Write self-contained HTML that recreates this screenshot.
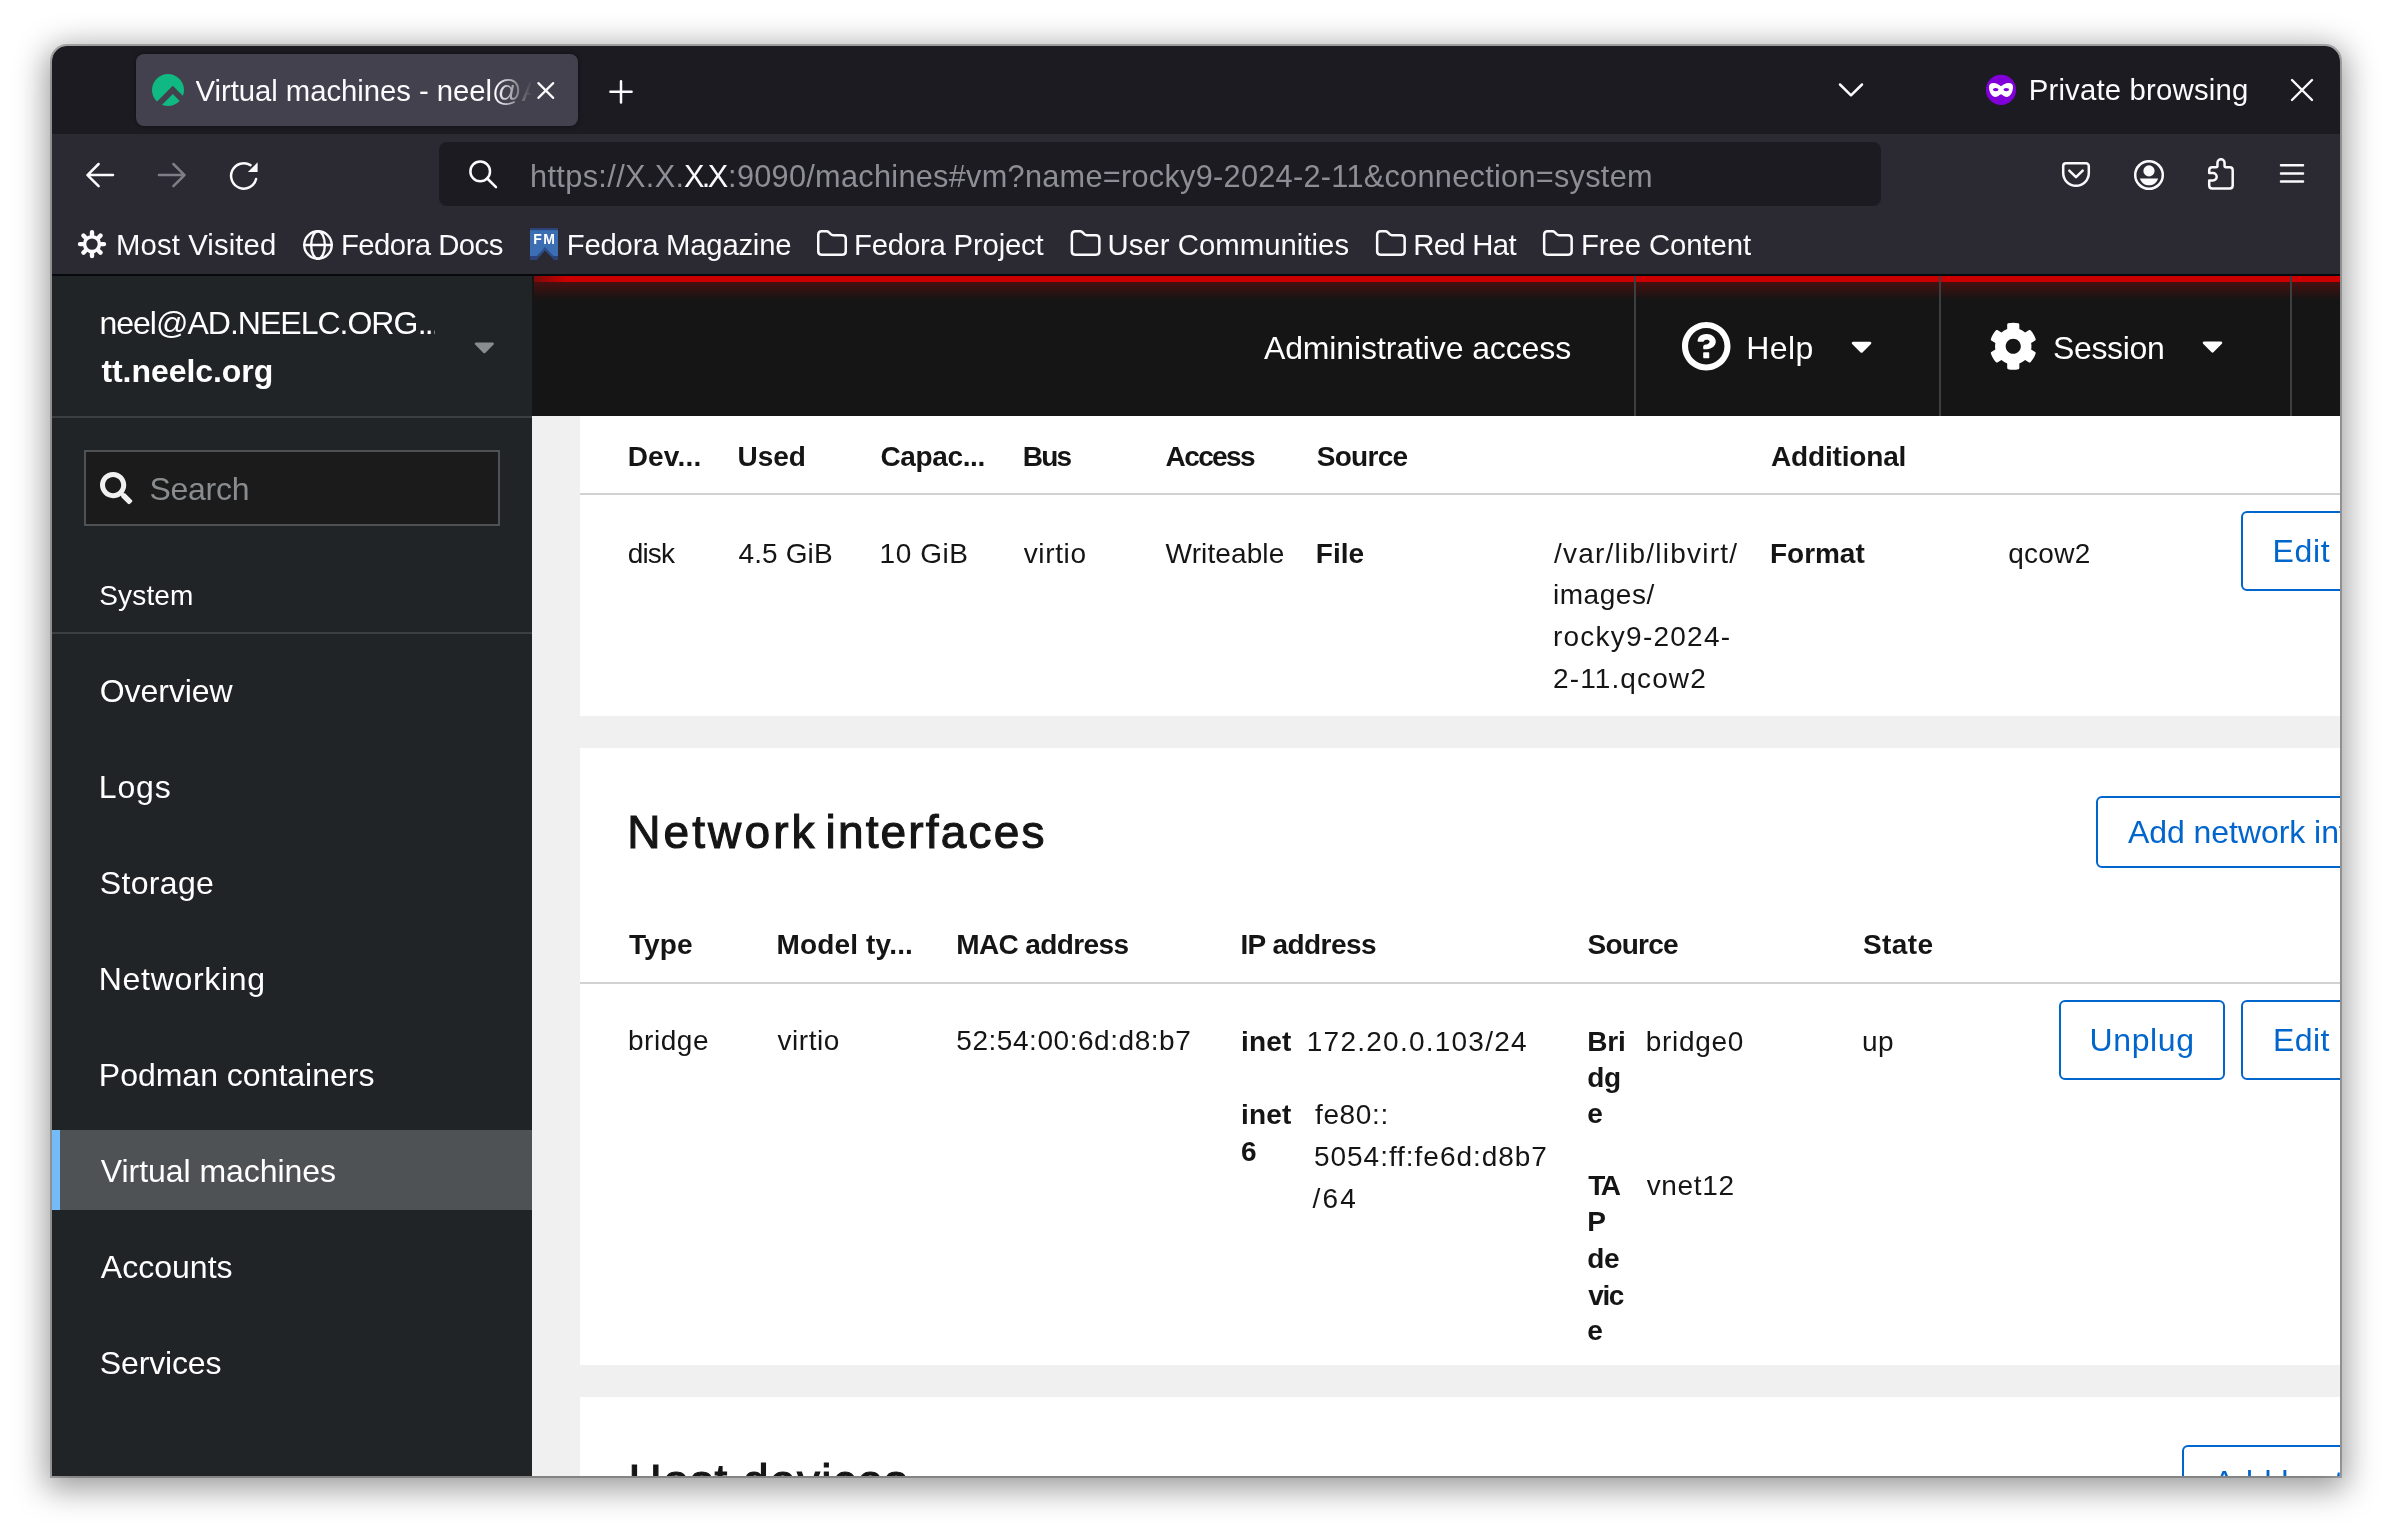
<!DOCTYPE html>
<html lang="en"><head><meta charset="utf-8"><title>Virtual machines - neel@AD.NEELC.ORG</title>
<style>
html,body{margin:0;padding:0;background:#fff}
body{width:2392px;height:1534px;position:relative;overflow:hidden;font-family:"Liberation Sans",sans-serif}
#shadow{position:absolute;left:52px;top:46px;width:2288px;height:1430px;border-radius:15px 15px 0 0;box-shadow:0 0 0 2px rgba(0,0,0,.25),0 7px 32px 6px rgba(0,0,0,.4)}
#win{position:absolute;left:52px;top:46px;width:2288px;height:1430px;border-radius:15px 15px 0 0;overflow:hidden;background:#f0f0f0}
#abs{position:absolute;left:-52px;top:-46px;width:2392px;height:1534px;will-change:transform}
.b{position:absolute}
.t{position:absolute;white-space:nowrap}
svg{position:absolute;overflow:visible}
.btn{position:absolute;border:2px solid #0066cc;border-radius:6px;box-sizing:border-box;background:#fff}
</style></head><body>
<div id="shadow"></div>
<div id="win"><div id="abs">
<!-- firefox chrome -->
<div class="b" style="left:52px;top:46px;width:2288px;height:88px;background:#1c1b22"></div>
<div class="b" style="left:52px;top:134px;width:2288px;height:140px;background:#2b2a33"></div>
<div class="b" style="left:52px;top:274px;width:2288px;height:2px;background:#060a0c"></div>
<div class="b" style="left:136px;top:54px;width:442px;height:72px;background:#42414d;border-radius:8px;box-shadow:0 0 4px rgba(0,0,0,.5)"></div>
<div class="b" style="left:439px;top:142px;width:1442px;height:64px;background:#1c1b22;border-radius:8px"></div>
<svg width="2392" height="1534" viewBox="0 0 2392 1534" style="left:0;top:0"><clipPath id="rc"><circle cx="168" cy="90" r="16"/></clipPath>
<g clip-path="url(#rc)" fill="#10b981">
<polygon points="150,72 186,72 186,99 172.8,85.8 151,107.6"/>
<polygon points="172.8,94 159,107.8 181,107.8 181,102.2"/></g>
<path d="M538.4 83.1 L553.2 97.9 M553.2 83.1 L538.4 97.9" fill="none" stroke="#fbfbfe" stroke-width="2.2" stroke-linecap="round" stroke-linejoin="round" />
<path d="M610.4 91.8 H631.6 M621 81.2 V102.4" fill="none" stroke="#fbfbfe" stroke-width="2.5" stroke-linecap="round" stroke-linejoin="round" />
<path d="M1840 84.5 L1851 95.3 L1862 84.5" fill="none" stroke="#fbfbfe" stroke-width="2.5" stroke-linecap="round" stroke-linejoin="round" />
<circle cx="2001" cy="89.9" r="15.1" fill="#8000d7"/>
<path fill="#fff" d="M2001 86.3 C1998.5 84.5 1996.5 83 1993.5 83 C1990.5 83 1989 84.5 1989 87 C1989 91.5 1991.5 97 1995.5 97 C1998 97 1999.5 94.2 2001 94.2 C2002.5 94.2 2004 97 2006.5 97 C2010.5 97 2013 91.5 2013 87 C2013 84.5 2011.5 83 2008.5 83 C2005.5 83 2003.5 84.5 2001 86.3 Z"/>
<ellipse cx="1995.7" cy="89.6" rx="2.8" ry="1.7" fill="#8000d7"/><ellipse cx="2006.3" cy="89.6" rx="2.8" ry="1.7" fill="#8000d7"/>
<path d="M2292 80 L2312 100 M2312 80 L2292 100" fill="none" stroke="#fbfbfe" stroke-width="2.4" stroke-linecap="round" stroke-linejoin="round" />
<path d="M113 175.1 H87.5 M98.6 164 L87.5 175.1 L98.6 186.2" fill="none" stroke="#fbfbfe" stroke-width="2.5" stroke-linecap="round" stroke-linejoin="round" />
<path d="M159 175.1 H184.5 M173.4 164 L184.5 175.1 L173.4 186.2" fill="none" stroke="#7f7e86" stroke-width="2.5" stroke-linecap="round" stroke-linejoin="round" />
<path d="M256.1 179 A12.7 12.7 0 1 1 250.5 165.1" fill="none" stroke="#fbfbfe" stroke-width="2.5" stroke-linecap="round" stroke-linejoin="round" /><path d="M257.6 162.3 V172 H247.9 Z" fill="#fbfbfe"/>
<circle cx="480.2" cy="171.4" r="9.8" fill="none" stroke="#fbfbfe" stroke-width="2.5" stroke-linecap="round" stroke-linejoin="round" /><path d="M487.3 178.5 L496 187.2" fill="none" stroke="#fbfbfe" stroke-width="2.5" stroke-linecap="round" stroke-linejoin="round" />
<path d="M2066 163.2 H2086 A2.8 2.8 0 0 1 2088.8 166 V173 A12.8 12.8 0 0 1 2063.2 173 V166 A2.8 2.8 0 0 1 2066 163.2 Z M2069.3 170.6 L2076 177.2 L2082.7 170.6" fill="none" stroke="#fbfbfe" stroke-width="2.5" stroke-linecap="round" stroke-linejoin="round" />
<circle cx="2149" cy="175" r="13.8" fill="none" stroke="#fbfbfe" stroke-width="2.5" stroke-linecap="round" stroke-linejoin="round" /><circle cx="2149" cy="170.9" r="5.6" fill="#fbfbfe"/><path d="M2139.8 178.4 H2158.2 C2156.5 183 2153 185.3 2149 185.3 C2145 185.3 2141.5 183 2139.8 178.4 Z" fill="#fbfbfe"/>
<path d="M2209.2 170.3 Q2209.2 167.3 2212.2 167.3 H2216 Q2217.45 167.3 2217.45 165.8 V162.85 A3.55 3.55 0 0 1 2224.55 162.85 V165.8 Q2224.55 167.3 2226 167.3 H2229.7 Q2232.7 167.3 2232.7 170.3 V185.6 Q2232.7 188.6 2229.7 188.6 H2212.2 Q2209.2 188.6 2209.2 185.6 V180.5 H2212.9 A3.8 3.8 0 0 0 2212.9 172.9 H2209.2 Z" fill="none" stroke="#fbfbfe" stroke-width="2.5" stroke-linecap="round" stroke-linejoin="round" />
<path d="M2281 165.3 H2303 M2281 173.4 H2303 M2281 181.6 H2303" fill="none" stroke="#fbfbfe" stroke-width="2.5" stroke-linecap="round" stroke-linejoin="round" />
<circle cx="92" cy="244.1" r="7.45" fill="none" stroke="#fbfbfe" stroke-width="3.5"/><path d="M101.00 244.10 L104.00 244.10 M98.36 250.46 L100.49 252.59 M92.00 253.10 L92.00 256.10 M85.64 250.46 L83.51 252.59 M83.00 244.10 L80.00 244.10 M85.64 237.74 L83.51 235.61 M92.00 235.10 L92.00 232.10 M98.36 237.74 L100.49 235.61 " fill="none" stroke="#fbfbfe" stroke-width="4.4" stroke-linecap="round" stroke-linejoin="round" />
<circle cx="318" cy="245" r="13.75" fill="none" stroke="#fbfbfe" stroke-width="2.4" stroke-linecap="round" stroke-linejoin="round" /><ellipse cx="318" cy="245" rx="6.85" ry="13.75" fill="none" stroke="#fbfbfe" stroke-width="2.4" stroke-linecap="round" stroke-linejoin="round" /><path d="M304.3 245 H331.7" fill="none" stroke="#fbfbfe" stroke-width="2.4" stroke-linecap="round" stroke-linejoin="round" />
<clipPath id="fmc"><path d="M530 228 H558 V260 H554.5 L545 250.3 L536 260 H530 Z"/></clipPath>
<g clip-path="url(#fmc)"><rect x="530" y="228" width="28" height="32" fill="#3c6eb4"/>
<rect x="530" y="228" width="28" height="2.2" fill="#2b4379"/>
<rect x="530" y="256" width="28" height="4" fill="#2b4379"/>
<path d="M536 260 L545 250.3 L554.5 260" fill="none" stroke="#2b4379" stroke-width="4.4" opacity=".75"/></g>
<path transform="translate(0.00 0)" d="M818.25 234.7 Q818.25 231.2 821.75 231.2 H826.5 Q827.8 231.2 828.7 232.1 L831 234.4 Q831.9 235.2 833.2 235.2 H842.25 Q845.75 235.2 845.75 238.7 V251.3 Q845.75 254.8 842.25 254.8 H821.75 Q818.25 254.8 818.25 251.3 Z" fill="none" stroke="#fbfbfe" stroke-width="2.5" stroke-linecap="round" stroke-linejoin="round" />
<path transform="translate(253.60 0)" d="M818.25 234.7 Q818.25 231.2 821.75 231.2 H826.5 Q827.8 231.2 828.7 232.1 L831 234.4 Q831.9 235.2 833.2 235.2 H842.25 Q845.75 235.2 845.75 238.7 V251.3 Q845.75 254.8 842.25 254.8 H821.75 Q818.25 254.8 818.25 251.3 Z" fill="none" stroke="#fbfbfe" stroke-width="2.5" stroke-linecap="round" stroke-linejoin="round" />
<path transform="translate(558.90 0)" d="M818.25 234.7 Q818.25 231.2 821.75 231.2 H826.5 Q827.8 231.2 828.7 232.1 L831 234.4 Q831.9 235.2 833.2 235.2 H842.25 Q845.75 235.2 845.75 238.7 V251.3 Q845.75 254.8 842.25 254.8 H821.75 Q818.25 254.8 818.25 251.3 Z" fill="none" stroke="#fbfbfe" stroke-width="2.5" stroke-linecap="round" stroke-linejoin="round" />
<path transform="translate(725.90 0)" d="M818.25 234.7 Q818.25 231.2 821.75 231.2 H826.5 Q827.8 231.2 828.7 232.1 L831 234.4 Q831.9 235.2 833.2 235.2 H842.25 Q845.75 235.2 845.75 238.7 V251.3 Q845.75 254.8 842.25 254.8 H821.75 Q818.25 254.8 818.25 251.3 Z" fill="none" stroke="#fbfbfe" stroke-width="2.5" stroke-linecap="round" stroke-linejoin="round" /></svg>
<!-- cockpit -->
<div class="b" style="left:52px;top:276px;width:480px;height:1200px;background:#212427"></div>
<div class="b" style="left:532px;top:276px;width:1808px;height:140px;background:#151515"></div>
<div class="b" style="left:534px;top:282px;width:1806px;height:18px;background:linear-gradient(to bottom,rgba(204,0,0,.28),rgba(204,0,0,0))"></div>
<div class="b" style="left:534px;top:276px;width:1806px;height:6px;background:linear-gradient(to right,#7d0a0a 0,#cc0000 32px,#cc0000 100%)"></div>
<div class="b" style="left:1634px;top:276px;width:2px;height:140px;background:#3c3f42"></div>
<div class="b" style="left:1939px;top:276px;width:2px;height:140px;background:#3c3f42"></div>
<div class="b" style="left:2290px;top:276px;width:2px;height:140px;background:#3c3f42"></div>
<div class="b" style="left:52px;top:416px;width:480px;height:2px;background:#3c3f42"></div>
<div class="b" style="left:84px;top:450px;width:416px;height:76px;background:#1b1b1b;border:2px solid #4f5255;box-sizing:border-box"></div>
<div class="b" style="left:52px;top:632px;width:480px;height:2px;background:#3c3f42"></div>
<div class="b" style="left:52px;top:1130px;width:480px;height:80px;background:#4f5255"></div>
<div class="b" style="left:52px;top:1130px;width:8px;height:80px;background:#73bcf7"></div>
<!-- content -->
<div class="b" style="left:580px;top:416px;width:1760px;height:300px;background:#fff"></div>
<div class="b" style="left:580px;top:493px;width:1760px;height:2px;background:#d2d2d2"></div>
<div class="b" style="left:580px;top:748px;width:1760px;height:617px;background:#fff"></div>
<div class="b" style="left:580px;top:982px;width:1760px;height:2px;background:#d2d2d2"></div>
<div class="b" style="left:580px;top:1397px;width:1760px;height:100px;background:#fff"></div>
<div class="btn" style="left:2241px;top:511px;width:140px;height:80px"></div>
<div class="btn" style="left:2096px;top:796px;width:300px;height:72px"></div>
<div class="btn" style="left:2059px;top:1000px;width:166px;height:80px"></div>
<div class="btn" style="left:2241px;top:1000px;width:140px;height:80px"></div>
<div class="btn" style="left:2182px;top:1445px;width:200px;height:72px"></div>
<svg viewBox="0 0 1024 1024" width="48.5" height="48.5" style="left:1681.75px;top:321.65px"><path fill="#fff" d="M521.3,576 C627.5,576 713.7,502 713.7,413.7 C713.7,325.4 627.6,253.6 521.3,253.6 C366,253.6 334.5,337.7 329.2,407.2 C329.2,414.3 335.2,416 343.5,416 L445,416 C450.5,416 458,415.5 460.8,406.5 C460.8,362.6 582.9,357.1 582.9,413.6 C582.9,441.9 556.2,470.9 521.3,473 C486.4,475.1 447.3,479.8 447.3,521.7 L447.3,553.8 C447.3,570.8 456.1,576 472,576 C487.9,576 521.3,576 521.3,576 M575.3,751.3 L575.3,655.3 C575.3,646.5 568.1,639.3 559.3,639.3 L463.3,639.3 C454.5,639.3 447.3,646.5 447.3,655.3 L447.3,751.3 C447.3,760.1 454.5,767.3 463.3,767.3 L559.3,767.3 C568.1,767.3 575.3,760.1 575.3,751.3 M512,896 C300.2,896 128,723.9 128,512 C128,300.3 300.2,128 512,128 C723.8,128 896,300.2 896,512 C896,723.8 723.7,896 512,896 M512.1,0 C229.7,0 0,229.8 0,512 C0,794.2 229.8,1024 512.1,1024 C794.4,1024 1024,794.3 1024,512 C1024,229.7 794.4,0 512.1,0"/></svg>
<svg viewBox="0 0 512 512" width="48.5" height="48.5" style="left:1988.75px;top:321.65px"><path fill="#fff" d="M487.4 315.7l-42.6-24.6c4.3-23.2 4.3-47 0-70.2l42.6-24.6c4.900-2.800 7.100-8.600 5.500-14-11.100-35.600-30-67.800-54.700-94.600-3.800-4.100-10-5.100-14.800-2.300L380.800 110c-17.900-15.400-38.500-27.300-60.800-35.100V25.800c0-5.600-3.900-10.500-9.400-11.700-36.700-8.200-74.300-7.800-109.200 0-5.500 1.200-9.400 6.100-9.400 11.700V75c-22.200 7.900-42.800 19.800-60.800 35.100L88.700 85.500c-4.900-2.800-11-1.900-14.800 2.300-24.700 26.700-43.600 58.900-54.700 94.600-1.700 5.400.6 11.200 5.500 14L67.300 221c-4.300 23.200-4.300 47 0 70.200l-42.600 24.600c-4.900 2.800-7.100 8.600-5.500 14 11.100 35.600 30 67.800 54.700 94.600 3.800 4.100 10 5.100 14.800 2.300l42.600-24.600c17.900 15.400 38.500 27.300 60.800 35.100v49.200c0 5.600 3.900 10.500 9.400 11.700 36.700 8.200 74.300 7.800 109.200 0 5.500-1.200 9.400-6.100 9.400-11.700v-49.200c22.200-7.900 42.800-19.800 60.800-35.100l42.600 24.600c4.900 2.800 11 1.900 14.800-2.300 24.700-26.700 43.600-58.900 54.700-94.600 1.500-5.500-.7-11.300-5.600-14.100zM256 336c-44.100 0-80-35.900-80-80s35.900-80 80-80 80 35.900 80 80-35.900 80-80 80z"/></svg>
<svg viewBox="0 0 320 512" width="21.115646258503503" height="33.7850340136056" style="left:1850.7421768707482px;top:329.1306122448979px"><path fill="#fff" d="M31.3 192h257.3c17.800 0 26.700 21.500 14.100 34.100L174.100 354.800c-7.800 7.800-20.500 7.800-28.300 0L17.200 226.100C4.600 213.500 13.500 192 31.300 192z"/></svg>
<svg viewBox="0 0 320 512" width="21.006802721088636" height="33.61088435374182" style="left:2201.646598639456px;top:329.19591836734685px"><path fill="#fff" d="M31.3 192h257.3c17.800 0 26.700 21.500 14.100 34.100L174.100 354.800c-7.800 7.800-20.500 7.800-28.300 0L17.200 226.100C4.600 213.500 13.500 192 31.300 192z"/></svg>
<svg viewBox="0 0 320 512" width="20.68027210884354" height="33.08843537414966" style="left:473.65986394557825px;top:329.59183673469386px"><path fill="#8a8d90" d="M31.3 192h257.3c17.800 0 26.700 21.500 14.100 34.100L174.100 354.800c-7.800 7.800-20.500 7.800-28.300 0L17.200 226.100C4.600 213.500 13.500 192 31.300 192z"/></svg>
<svg viewBox="0 0 512 512" width="32.3" height="32.3" style="left:100px;top:472px"><path fill="#f0f0f0" d="M505 442.700L405.300 343c-4.500-4.500-10.600-7-17-7H372c27.600-35.300 44-79.700 44-128C416 93.100 322.900 0 208 0S0 93.100 0 208s93.100 208 208 208c48.300 0 92.700-16.400 128-44v16.300c0 6.400 2.500 12.500 7 17l99.700 99.700c9.400 9.400 24.600 9.400 33.900 0l28.300-28.300c9.400-9.400 9.400-24.600.1-34zM208 336c-70.700 0-128-57.200-128-128 0-70.700 57.200-128 128-128 70.700 0 128 57.200 128 128 0 70.700-57.200 128-128 128z"/></svg>
<header id="browser">
<span class="t" style="left:2028.70px;top:72.20px;font-size:29.3px;line-height:35px;letter-spacing:0.202px;color:#fbfbfe;">Private browsing</span>
<span class="t" style="left:116.00px;top:226.80px;font-size:29.3px;line-height:35px;letter-spacing:0.115px;color:#fbfbfe;">Most Visited</span>
<span class="t" style="left:341.00px;top:226.80px;font-size:29.3px;line-height:35px;letter-spacing:-0.536px;color:#fbfbfe;">Fedora Docs</span>
<span class="t" style="left:566.80px;top:226.80px;font-size:29.3px;line-height:35px;letter-spacing:-0.236px;color:#fbfbfe;">Fedora Magazine</span>
<span class="t" style="left:854.00px;top:226.80px;font-size:29.3px;line-height:35px;letter-spacing:-0.193px;color:#fbfbfe;">Fedora Project</span>
<span class="t" style="left:1107.60px;top:226.80px;font-size:29.3px;line-height:35px;letter-spacing:0.034px;color:#fbfbfe;">User Communities</span>
<span class="t" style="left:1413.30px;top:226.80px;font-size:29.3px;line-height:35px;letter-spacing:-0.706px;color:#fbfbfe;">Red Hat</span>
<span class="t" style="left:1581.00px;top:226.80px;font-size:29.3px;line-height:35px;letter-spacing:-0.077px;color:#fbfbfe;">Free Content</span>
<span class="t" style="left:195.50px;top:72.90px;font-size:29.3px;line-height:35px;letter-spacing:-0.042px;color:#fbfbfe;width:339px;overflow:hidden;white-space:nowrap;-webkit-mask-image:linear-gradient(to right,#000 0,#000 300px,transparent 336px);mask-image:linear-gradient(to right,#000 0,#000 300px,transparent 336px);">Virtual machines - neel@AD.NEELC.ORG</span>
<span class="t" style="left:530.00px;top:157.70px;font-size:30.7px;line-height:37px;letter-spacing:0.366px;color:#8e8e96;">https://X.X.</span>
<span class="t" style="left:683.90px;top:157.70px;font-size:30.7px;line-height:37px;letter-spacing:-2.547px;color:#fbfbfe;">X.X</span>
<span class="t" style="left:728.10px;top:157.70px;font-size:30.7px;line-height:37px;letter-spacing:0.283px;color:#8e8e96;">:9090/machines#vm?name=rocky9-2024-2-11&amp;connection=system</span>
<span class="t" style="left:533.30px;top:230.50px;font-size:14px;line-height:17px;letter-spacing:1.300px;color:#fff;font-weight:700;">FM</span>
</header>
<nav id="sidebar">
<span class="t" style="left:99.40px;top:303.80px;font-size:32px;line-height:38px;letter-spacing:-0.989px;color:#fff;">neel@AD.NEELC.ORG</span>
<span class="t" style="left:417.80px;top:303.80px;font-size:32px;line-height:38px;letter-spacing:-1.891px;color:#fff;width:17.5px;overflow:hidden;">...</span>
<span class="t" style="left:101.40px;top:351.70px;font-size:32px;line-height:38px;letter-spacing:-0.057px;color:#fff;font-weight:700;">tt.neelc.org</span>
<span class="t" style="left:149.40px;top:470.20px;font-size:32px;line-height:38px;letter-spacing:-0.259px;color:#8a8d90;">Search</span>
<span class="t" style="left:99.30px;top:579.00px;font-size:28px;line-height:34px;letter-spacing:0.135px;color:#fff;">System</span>
<span class="t" style="left:99.80px;top:672.00px;font-size:32px;line-height:38px;letter-spacing:-0.064px;color:#fff;">Overview</span>
<span class="t" style="left:98.80px;top:768.00px;font-size:32px;line-height:38px;letter-spacing:0.836px;color:#fff;">Logs</span>
<span class="t" style="left:99.80px;top:864.00px;font-size:32px;line-height:38px;letter-spacing:0.320px;color:#fff;">Storage</span>
<span class="t" style="left:98.80px;top:960.00px;font-size:32px;line-height:38px;letter-spacing:0.693px;color:#fff;">Networking</span>
<span class="t" style="left:98.80px;top:1056.00px;font-size:32px;line-height:38px;letter-spacing:-0.007px;color:#fff;">Podman containers</span>
<span class="t" style="left:100.80px;top:1152.00px;font-size:32px;line-height:38px;letter-spacing:-0.051px;color:#fff;">Virtual machines</span>
<span class="t" style="left:100.80px;top:1248.00px;font-size:32px;line-height:38px;letter-spacing:0.025px;color:#fff;">Accounts</span>
<span class="t" style="left:99.80px;top:1344.00px;font-size:32px;line-height:38px;letter-spacing:-0.143px;color:#fff;">Services</span>
</nav>
<header id="topbar">
<span class="t" style="left:1263.90px;top:328.80px;font-size:32px;line-height:38px;letter-spacing:-0.107px;color:#fff;">Administrative access</span>
<span class="t" style="left:1746.20px;top:328.80px;font-size:32px;line-height:38px;letter-spacing:0.428px;color:#fff;">Help</span>
<span class="t" style="left:2053.00px;top:328.80px;font-size:32px;line-height:38px;letter-spacing:-0.341px;color:#fff;">Session</span>
</header>
<section id="disks">
<span class="t" style="left:627.70px;top:439.90px;font-size:28px;line-height:34px;letter-spacing:0.171px;color:#151515;font-weight:700;">Dev...</span>
<span class="t" style="left:737.50px;top:439.90px;font-size:28px;line-height:34px;letter-spacing:-0.022px;color:#151515;font-weight:700;">Used</span>
<span class="t" style="left:880.50px;top:439.90px;font-size:28px;line-height:34px;letter-spacing:-0.371px;color:#151515;font-weight:700;">Capac...</span>
<span class="t" style="left:1022.70px;top:439.90px;font-size:28px;line-height:34px;letter-spacing:-1.762px;color:#151515;font-weight:700;">Bus</span>
<span class="t" style="left:1165.60px;top:439.90px;font-size:28px;line-height:34px;letter-spacing:-1.622px;color:#151515;font-weight:700;">Access</span>
<span class="t" style="left:1316.80px;top:439.90px;font-size:28px;line-height:34px;letter-spacing:-0.730px;color:#151515;font-weight:700;">Source</span>
<span class="t" style="left:1771.00px;top:439.90px;font-size:28px;line-height:34px;letter-spacing:-0.166px;color:#151515;font-weight:700;">Additional</span>
<span class="t" style="left:627.70px;top:536.60px;font-size:28px;line-height:34px;letter-spacing:-0.831px;color:#151515;">disk</span>
<span class="t" style="left:738.50px;top:536.60px;font-size:28px;line-height:34px;letter-spacing:0.116px;color:#151515;">4.5 GiB</span>
<span class="t" style="left:879.50px;top:536.60px;font-size:28px;line-height:34px;letter-spacing:0.575px;color:#151515;">10 GiB</span>
<span class="t" style="left:1023.70px;top:536.60px;font-size:28px;line-height:34px;letter-spacing:0.631px;color:#151515;">virtio</span>
<span class="t" style="left:1165.60px;top:536.60px;font-size:28px;line-height:34px;letter-spacing:0.115px;color:#151515;">Writeable</span>
<span class="t" style="left:1315.80px;top:536.60px;font-size:28px;line-height:34px;letter-spacing:0.013px;color:#151515;font-weight:700;">File</span>
<span class="t" style="left:1554.00px;top:536.60px;font-size:28px;line-height:34px;letter-spacing:1.226px;color:#151515;">/var/lib/libvirt/</span>
<span class="t" style="left:1553.00px;top:578.30px;font-size:28px;line-height:34px;letter-spacing:0.523px;color:#151515;">images/</span>
<span class="t" style="left:1553.00px;top:620.10px;font-size:28px;line-height:34px;letter-spacing:1.238px;color:#151515;">rocky9-2024-</span>
<span class="t" style="left:1553.00px;top:661.90px;font-size:28px;line-height:34px;letter-spacing:1.121px;color:#151515;">2-11.qcow2</span>
<span class="t" style="left:1770.00px;top:536.60px;font-size:28px;line-height:34px;letter-spacing:-0.034px;color:#151515;font-weight:700;">Format</span>
<span class="t" style="left:2008.20px;top:536.60px;font-size:28px;line-height:34px;letter-spacing:0.284px;color:#151515;">qcow2</span>
<span class="t" style="left:2272.50px;top:532.40px;font-size:32px;line-height:38px;letter-spacing:0.683px;color:#0066cc;">Edit</span>
</section>
<section id="network">
<span class="t" style="left:627.20px;top:805.00px;font-size:46px;line-height:55px;letter-spacing:3.116px;color:#151515;-webkit-text-stroke:1.1px #151515;">Network </span>
<span class="t" style="left:825.50px;top:805.00px;font-size:46px;line-height:55px;letter-spacing:2.163px;color:#151515;-webkit-text-stroke:1.1px #151515;">interfaces</span>
<span class="t" style="left:628.90px;top:927.70px;font-size:28px;line-height:34px;letter-spacing:0.166px;color:#151515;font-weight:700;">Type</span>
<span class="t" style="left:776.50px;top:927.70px;font-size:28px;line-height:34px;letter-spacing:0.156px;color:#151515;font-weight:700;">Model ty...</span>
<span class="t" style="left:956.30px;top:927.70px;font-size:28px;line-height:34px;letter-spacing:-0.617px;color:#151515;font-weight:700;">MAC address</span>
<span class="t" style="left:1240.40px;top:927.70px;font-size:28px;line-height:34px;letter-spacing:-0.551px;color:#151515;font-weight:700;">IP address</span>
<span class="t" style="left:1587.50px;top:927.70px;font-size:28px;line-height:34px;letter-spacing:-0.770px;color:#151515;font-weight:700;">Source</span>
<span class="t" style="left:1862.90px;top:927.70px;font-size:28px;line-height:34px;letter-spacing:0.451px;color:#151515;font-weight:700;">State</span>
<span class="t" style="left:627.90px;top:1024.30px;font-size:28px;line-height:34px;letter-spacing:0.548px;color:#151515;">bridge</span>
<span class="t" style="left:777.50px;top:1024.30px;font-size:28px;line-height:34px;letter-spacing:0.551px;color:#151515;">virtio</span>
<span class="t" style="left:956.30px;top:1024.30px;font-size:28px;line-height:34px;letter-spacing:0.544px;color:#151515;">52:54:00:6d:d8:b7</span>
<span class="t" style="left:1241.00px;top:1024.50px;font-size:28px;line-height:34px;letter-spacing:0.182px;color:#151515;font-weight:700;">inet</span>
<span class="t" style="left:1306.80px;top:1024.50px;font-size:28px;line-height:34px;letter-spacing:1.240px;color:#151515;">172.20.0.103/24</span>
<span class="t" style="left:1241.00px;top:1098.30px;font-size:28px;line-height:34px;letter-spacing:0.182px;color:#151515;font-weight:700;">inet</span>
<span class="t" style="left:1241.00px;top:1134.60px;font-size:28px;line-height:34px;letter-spacing:0.000px;color:#151515;font-weight:700;">6</span>
<span class="t" style="left:1315.00px;top:1098.30px;font-size:28px;line-height:34px;letter-spacing:0.625px;color:#151515;">fe80::</span>
<span class="t" style="left:1314.00px;top:1140.20px;font-size:28px;line-height:34px;letter-spacing:0.963px;color:#151515;">5054:ff:fe6d:d8b7</span>
<span class="t" style="left:1312.60px;top:1182.20px;font-size:28px;line-height:34px;letter-spacing:2.200px;color:#151515;">/64</span>
<span class="t" style="left:1587.30px;top:1024.50px;font-size:28px;line-height:34px;letter-spacing:-0.209px;color:#151515;font-weight:700;">Bri</span>
<span class="t" style="left:1587.30px;top:1061.40px;font-size:28px;line-height:34px;letter-spacing:-0.404px;color:#151515;font-weight:700;">dg</span>
<span class="t" style="left:1587.30px;top:1097.00px;font-size:28px;line-height:34px;letter-spacing:0.000px;color:#151515;font-weight:700;">e</span>
<span class="t" style="left:1645.70px;top:1024.50px;font-size:28px;line-height:34px;letter-spacing:0.711px;color:#151515;">bridge0</span>
<span class="t" style="left:1588.30px;top:1168.70px;font-size:28px;line-height:34px;letter-spacing:-2.525px;color:#151515;font-weight:700;">TA</span>
<span class="t" style="left:1587.30px;top:1205.00px;font-size:28px;line-height:34px;letter-spacing:0.000px;color:#151515;font-weight:700;">P</span>
<span class="t" style="left:1587.30px;top:1241.90px;font-size:28px;line-height:34px;letter-spacing:-0.404px;color:#151515;font-weight:700;">de</span>
<span class="t" style="left:1588.30px;top:1278.80px;font-size:28px;line-height:34px;letter-spacing:-1.426px;color:#151515;font-weight:700;">vic</span>
<span class="t" style="left:1587.30px;top:1314.40px;font-size:28px;line-height:34px;letter-spacing:0.000px;color:#151515;font-weight:700;">e</span>
<span class="t" style="left:1646.70px;top:1168.70px;font-size:28px;line-height:34px;letter-spacing:0.641px;color:#151515;">vnet12</span>
<span class="t" style="left:1861.90px;top:1024.50px;font-size:28px;line-height:34px;letter-spacing:0.528px;color:#151515;">up</span>
<span class="t" style="left:2089.60px;top:1021.00px;font-size:32px;line-height:38px;letter-spacing:0.598px;color:#0066cc;">Unplug</span>
<span class="t" style="left:2273.00px;top:1021.00px;font-size:32px;line-height:38px;letter-spacing:0.417px;color:#0066cc;">Edit</span>
<span class="t" style="left:2128.00px;top:812.80px;font-size:32px;line-height:38px;letter-spacing:-0.057px;color:#0066cc;">Add network interface</span>
</section>
<section id="hostdev">
<span class="t" style="left:628.60px;top:1453.50px;font-size:46px;line-height:55px;letter-spacing:1.406px;color:#151515;-webkit-text-stroke:1.1px #151515;">Host devices</span>
<span class="t" style="left:2213.50px;top:1463.00px;font-size:32px;line-height:38px;letter-spacing:0.500px;color:#0066cc;">Add host device</span>
</section>
</div></div>
</body></html>
